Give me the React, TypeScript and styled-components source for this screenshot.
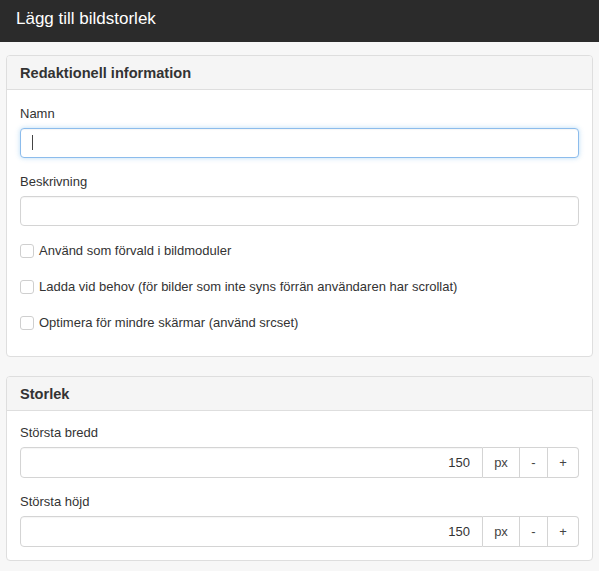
import React from "react";
import styled, { createGlobalStyle } from "styled-components";

const GlobalStyle = createGlobalStyle`
  html, body {
    margin: 0;
    padding: 0;
    background: #f7f7f7;
    font-family: "Liberation Sans", Arial, Helvetica, sans-serif;
    color: #333;
  }
  * { box-sizing: border-box; }
`;

const TopBar = styled.header`
  height: 42px;
  background: #2b2b2b;
  padding: 10px 16px 14px;
`;

const Title = styled.h1`
  margin: 0;
  font-size: 17px;
  line-height: 18px;
  font-weight: normal;
  color: #fff;
`;

const Main = styled.main`
  padding: 13px 6px 10px;
  display: flex;
  flex-direction: column;
  gap: 19px;
`;

const Panel = styled.section`
  background: #fff;
  border: 1px solid #dedede;
  border-radius: 4px;
  overflow: hidden;
`;

const PanelHeading = styled.h2`
  margin: 0;
  height: 34px;
  padding: 0 13px;
  display: flex;
  align-items: center;
  background: #f5f5f5;
  border-bottom: 1px solid #dedede;
  font-size: 14.6px;
  font-weight: bold;
  color: #333;
`;

const PanelBody = styled.div<{ $top: number; $bottom: number }>`
  padding: ${(p) => p.$top}px 13px ${(p) => p.$bottom}px;
  display: flex;
  flex-direction: column;
`;

const Field = styled.div`
  display: flex;
  flex-direction: column;
  gap: 4px;
  margin-bottom: 14px;
  &:last-child { margin-bottom: 0; }
`;

const Label = styled.label`
  font-size: 13px;
  line-height: 20px;
  color: #333;
`;

const InputWrap = styled.div`
  position: relative;
  display: flex;
`;

const TextInput = styled.input<{ $focused?: boolean }>`
  width: 100%;
  height: 30px;
  padding: 0 12px;
  font: inherit;
  font-size: 13px;
  color: #555;
  background: #fff;
  border: 1px solid ${(p) => (p.$focused ? "#8cbcec" : "#d4d4d4")};
  border-radius: 4px;
  outline: none;
  box-shadow: ${(p) =>
    p.$focused
      ? "inset 0 1px 1px rgba(0,0,0,.04), 0 0 5px rgba(102,175,233,.45)"
      : "inset 0 1px 1px rgba(0,0,0,.04)"};
`;

const Caret = styled.span`
  position: absolute;
  left: 12px;
  top: 7px;
  width: 1px;
  height: 15px;
  background: #444;
`;

const Checks = styled.div`
  display: flex;
  flex-direction: column;
  gap: 16px;
  margin-top: 1px;
`;

const CheckRow = styled.label`
  display: flex;
  align-items: center;
  gap: 5px;
  font-size: 13px;
  line-height: 20px;
  color: #333;
`;

const Box = styled.span`
  width: 14px;
  height: 14px;
  border: 1px solid #cfcfcf;
  border-radius: 3px;
  background: #fff;
  flex: none;
`;

const Group = styled.div`
  display: flex;
  height: 31px;
`;

const NumberInput = styled.input`
  flex: 1;
  min-width: 0;
  height: 100%;
  padding: 0 12px;
  text-align: right;
  font: inherit;
  font-size: 13px;
  color: #333;
  background: #fff;
  border: 1px solid #d4d4d4;
  border-radius: 4px 0 0 4px;
  outline: none;
  box-shadow: inset 0 1px 1px rgba(0,0,0,.04);
`;

const Addon = styled.span<{ $w: number; $last?: boolean }>`
  width: ${(p) => p.$w}px;
  height: 100%;
  display: flex;
  align-items: center;
  justify-content: center;
  font-size: 13px;
  color: #444;
  background: #fff;
  border: 1px solid #d4d4d4;
  border-left: none;
  border-radius: ${(p) => (p.$last ? "0 4px 4px 0" : "0")};
`;

const SizeField = ({ label, value }: { label: string; value: string }) => (
  <Field>
    <Label>{label}</Label>
    <Group>
      <NumberInput defaultValue={value} />
      <Addon $w={37}>px</Addon>
      <Addon $w={28}>-</Addon>
      <Addon $w={31} $last>
        +
      </Addon>
    </Group>
  </Field>
);

export default function App() {
  return (
    <>
      <GlobalStyle />
      <TopBar>
        <Title>Lägg till bildstorlek</Title>
      </TopBar>
      <Main>
        <Panel>
          <PanelHeading>Redaktionell information</PanelHeading>
          <PanelBody $top={14} $bottom={23}>
            <Field>
              <Label>Namn</Label>
              <InputWrap>
                <TextInput $focused />
                <Caret />
              </InputWrap>
            </Field>
            <Field>
              <Label>Beskrivning</Label>
              <InputWrap>
                <TextInput />
              </InputWrap>
            </Field>
            <Checks>
              <CheckRow>
                <Box />
                Använd som förvald i bildmoduler
              </CheckRow>
              <CheckRow>
                <Box />
                Ladda vid behov (för bilder som inte syns förrän användaren har scrollat)
              </CheckRow>
              <CheckRow>
                <Box />
                Optimera för mindre skärmar (använd srcset)
              </CheckRow>
            </Checks>
          </PanelBody>
        </Panel>
        <Panel>
          <PanelHeading>Storlek</PanelHeading>
          <PanelBody $top={12} $bottom={13}>
            <SizeField label="Största bredd" value="150" />
            <SizeField label="Största höjd" value="150" />
          </PanelBody>
        </Panel>
      </Main>
    </>
  );
}
